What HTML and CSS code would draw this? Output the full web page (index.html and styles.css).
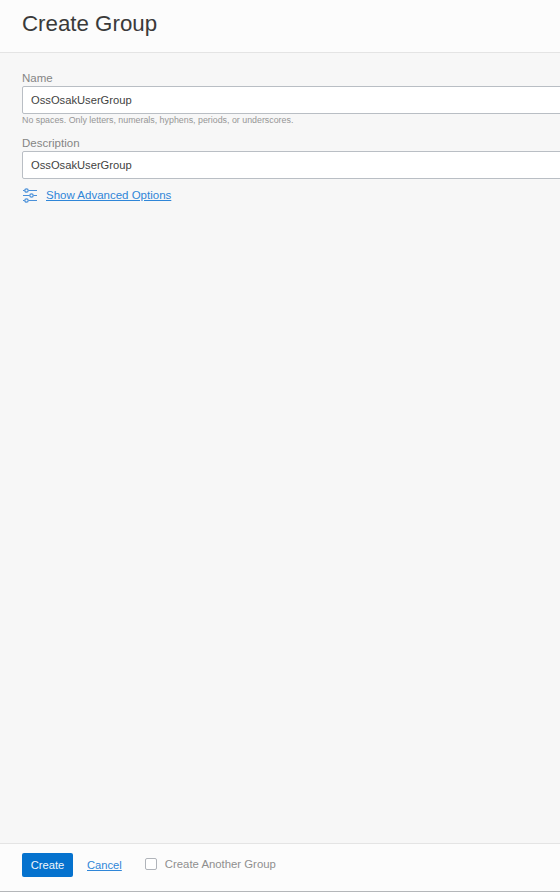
FILE: index.html
```html
<!DOCTYPE html>
<html lang="en">
<head>
    <meta charset="UTF-8">
    <title>Create Group</title>
    <link rel="stylesheet" href="styles.css">
</head>
<body>
    <div class="panel">
        <header class="panel-header">
            <h1>Create Group</h1>
        </header>

        <main class="panel-body">
            <div class="form-group">
                <label for="name">Name</label>
                <input type="text" id="name" value="OssOsakUserGroup">
                <div class="hint">No spaces. Only letters, numerals, hyphens, periods, or underscores.</div>
            </div>

            <div class="form-group">
                <label for="description">Description</label>
                <input type="text" id="description" value="OssOsakUserGroup">
            </div>

            <div class="advanced">
                <svg class="advanced-icon" width="14" height="15" viewBox="0 0 14 15" fill="none" stroke="#4a90d9" stroke-width="1.2">
                    <path d="M0 2.5h1.5M5.5 2.5h8.5M0 7.5h6.5M10.5 7.5h3.5M0 12.5h1.5M5.5 12.5h8.5"/>
                    <circle cx="3.5" cy="2.5" r="1.7"/>
                    <circle cx="8.5" cy="7.5" r="1.7"/>
                    <circle cx="3.5" cy="12.5" r="1.7"/>
                </svg>
                <a href="#">Show Advanced Options</a>
            </div>
        </main>

        <footer class="panel-footer">
            <button class="btn">Create</button>
            <a href="#" class="cancel">Cancel</a>
            <label class="another">
                <input type="checkbox">
                <span>Create Another Group</span>
            </label>
        </footer>
    </div>
</body>
</html>
```

FILE: styles.css
```css
* {
    margin: 0;
    padding: 0;
    box-sizing: border-box;
}

html, body {
    height: 100%;
    overflow: hidden;
}

body {
    font-family: "Liberation Sans", Arial, sans-serif;
    background: #f7f7f7;
    color: #333333;
}

.panel {
    display: flex;
    flex-direction: column;
    height: 892px;
    border-bottom: 1px solid #b4b6b9;
}

.panel-header {
    height: 53px;
    padding: 11px 22px 0;
    background: #fcfcfc;
    border-bottom: 1px solid #e4e4e4;
}

.panel-header h1 {
    font-size: 22.3px;
    line-height: 26px;
    font-weight: 400;
    color: #3a3a3a;
}

.panel-body {
    flex: 1;
    padding: 18px 0 0 22px;
}

.form-group {
    margin-bottom: 7px;
}

.form-group label {
    display: block;
    font-size: 11.5px;
    line-height: 15px;
    color: #858585;
}

.form-group input {
    display: block;
    width: 560px;
    height: 28px;
    padding: 0 8px;
    font-family: inherit;
    font-size: 11.2px;
    color: #3f3f3f;
    background: #ffffff;
    border: 1px solid #b9bec4;
    border-radius: 2px;
    outline: none;
}

.hint {
    margin-top: 1px;
    height: 14px;
    font-size: 8.85px;
    line-height: 11px;
    color: #969696;
}

.advanced {
    display: flex;
    align-items: center;
    gap: 9px;
    margin-top: 9px;
    margin-left: 1px;
}

.advanced-icon {
    flex: none;
}

.advanced a,
.cancel {
    font-size: 11.5px;
    line-height: 15px;
    color: #2f86d8;
    text-decoration: underline;
}

.panel-footer {
    display: flex;
    align-items: center;
    height: 48px;
    padding: 0 22px 6px;
    background: #fcfcfc;
    border-top: 1px solid #e4e4e4;
}

.btn {
    width: 51px;
    height: 24px;
    font-family: inherit;
    font-size: 11.2px;
    color: #f2f7fc;
    background: #0572ce;
    border: none;
    border-radius: 2px;
}

.panel-footer .cancel {
    margin-left: 14px;
    margin-top: 2px;
    font-size: 11.2px;
}

.another {
    display: flex;
    align-items: center;
    gap: 8px;
    margin-left: 23px;
    margin-bottom: 2px;
    font-size: 11.35px;
    color: #8f8f8f;
}

.another input {
    appearance: none;
    width: 12px;
    height: 12px;
    background: #ffffff;
    border: 1px solid #b0b4ba;
    border-radius: 2px;
}
```
